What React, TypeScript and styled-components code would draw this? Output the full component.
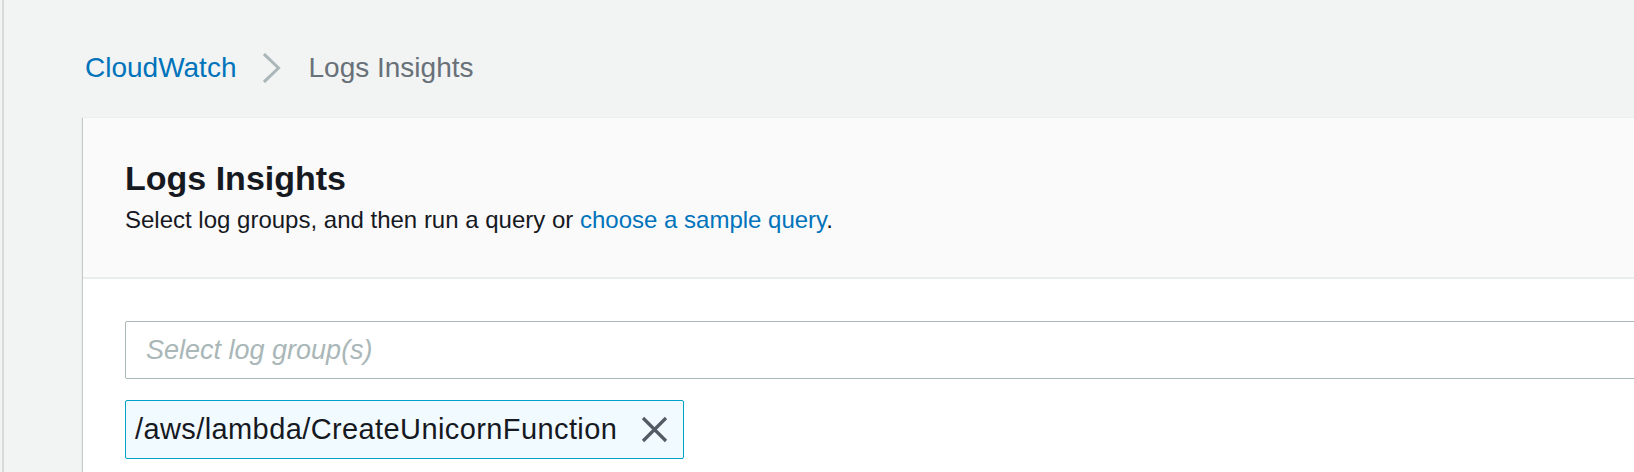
import React from "react";
import styled, { createGlobalStyle } from "styled-components";

const GlobalStyle = createGlobalStyle`
  html, body {
    margin: 0;
    padding: 0;
    background: #f2f3f3;
    font-family: "Liberation Sans", Arial, sans-serif;
  }
  * { box-sizing: border-box; }
`;

const Page = styled.div`
  min-height: 472px;
  margin-left: 2px;
  border-left: 2px solid #d5dbdb;
  padding: 51px 0 0 79px;
  overflow: hidden;
  background: #f2f3f3;
`;

const Breadcrumbs = styled.nav`
  display: flex;
  align-items: center;
  gap: 27px;
  padding-left: 2px;
  height: 34px;
  margin-bottom: 32px;
`;

const Crumb = styled.a<{ $current?: boolean }>`
  font-size: 28px;
  line-height: 34px;
  text-decoration: none;
  color: ${(p) => (p.$current ? "#687078" : "#0073bb")};
  cursor: ${(p) => (p.$current ? "default" : "pointer")};
`;

const Chevron = styled.svg`
  width: 18px;
  height: 30px;
  flex: none;
`;

const Panel = styled.section`
  margin-right: -120px;
  background: #ffffff;
  border-top: 1px solid #eaeded;
  box-shadow: 0 1px 1px 0 rgba(0, 28, 36, 0.3),
    1px 1px 1px 0 rgba(0, 28, 36, 0.15),
    -1px 1px 1px 0 rgba(0, 28, 36, 0.15);
`;

const PanelHeader = styled.header`
  background: #fafafa;
  border-bottom: 2px solid #eaeded;
  padding: 40px 42px 42px;
  display: flex;
  flex-direction: column;
  gap: 7px;
`;

const Title = styled.h1`
  margin: 0;
  font-size: 34px;
  line-height: 40px;
  font-weight: 700;
  color: #16191f;
`;

const Description = styled.p`
  margin: 0;
  font-size: 24px;
  line-height: 30px;
  color: #16191f;
`;

const Link = styled.a`
  color: #0073bb;
  text-decoration: none;
`;

const PanelBody = styled.div`
  padding: 42px 42px 30px;
  display: flex;
  flex-direction: column;
  align-items: flex-start;
  gap: 21px;
`;

const SelectBox = styled.div`
  align-self: stretch;
  height: 58px;
  border: 1px solid #aab7b8;
  border-radius: 2px;
  background: #ffffff;
  display: flex;
  align-items: center;
  padding-left: 20px;
`;

const Placeholder = styled.span`
  font-size: 27px;
  font-style: italic;
  color: #aab7b8;
`;

const Token = styled.div`
  height: 59px;
  display: flex;
  align-items: center;
  gap: 23px;
  padding: 0 15px 0 9px;
  background: #f1faff;
  border: 1px solid #00a1c9;
  border-radius: 2px;
`;

const TokenLabel = styled.span`
  font-size: 29px;
  letter-spacing: 0.4px;
  color: #16191f;
`;

const Dismiss = styled.button`
  border: none;
  background: none;
  padding: 0;
  width: 28px;
  height: 28px;
  display: flex;
  align-items: center;
  justify-content: center;
  color: #545b64;
  cursor: pointer;
`;

export default function App() {
  return (
    <>
      <GlobalStyle />
      <Page>
        <Breadcrumbs>
          <Crumb>CloudWatch</Crumb>
          <Chevron viewBox="0 0 18 30" fill="none">
            <polyline
              points="2,2 15.5,15 2,28"
              stroke="#aab7b8"
              strokeWidth="3"
              strokeLinecap="square"
            />
          </Chevron>
          <Crumb $current>Logs Insights</Crumb>
        </Breadcrumbs>
        <Panel>
          <PanelHeader>
            <Title>Logs Insights</Title>
            <Description>
              Select log groups, and then run a query or{" "}
              <Link>choose a sample query</Link>.
            </Description>
          </PanelHeader>
          <PanelBody>
            <SelectBox>
              <Placeholder>Select log group(s)</Placeholder>
            </SelectBox>
            <Token>
              <TokenLabel>/aws/lambda/CreateUnicornFunction</TokenLabel>
              <Dismiss aria-label="Remove">
                <svg width="27" height="27" viewBox="0 0 27 27" fill="none">
                  <path
                    d="M2 2 L25 25 M25 2 L2 25"
                    stroke="currentColor"
                    strokeWidth="3.2"
                  />
                </svg>
              </Dismiss>
            </Token>
          </PanelBody>
        </Panel>
      </Page>
    </>
  );
}
